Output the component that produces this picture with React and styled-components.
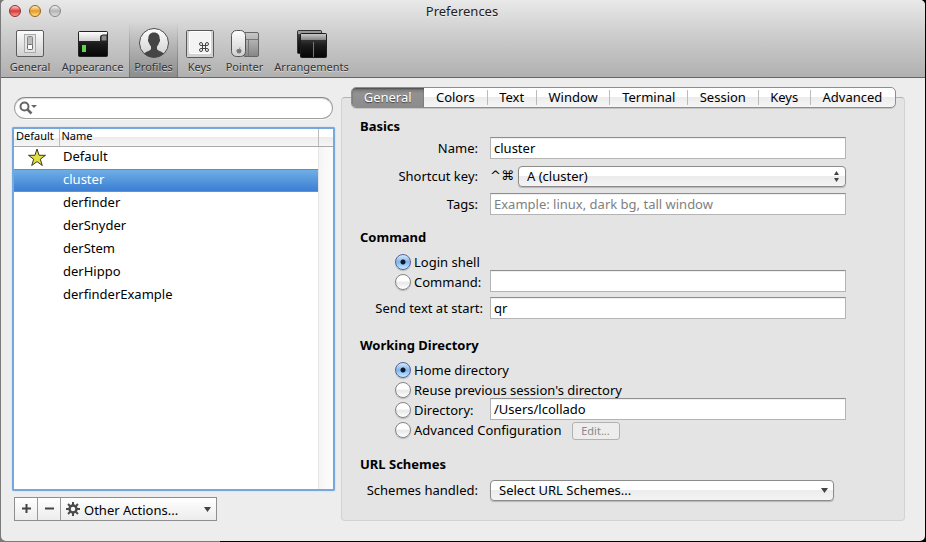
import React, { useState } from "react";
import styled, { createGlobalStyle, css } from "styled-components";

const GlobalStyle = createGlobalStyle`
  * { box-sizing: border-box; }
  body {
    margin: 0;
    background: #000;
    color: #000;
    font: 13px/18px "Lucida Grande", "Noto Sans", "DejaVu Sans", sans-serif;
  }
  button, input, select { font: inherit; color: inherit; margin: 0; }
  button { cursor: default; }
`;

const Desktop = styled.div`
  min-height: 100vh;
  display: flex;
  padding: 0 1px 1px;
  background: linear-gradient(90deg, #7a7a7a 0 220px, #000 220px);
`;

const Window = styled.main`
  flex: 1;
  min-width: 0;
  display: flex;
  flex-direction: column;
  border-radius: 5px;
  background: #ededed;
  overflow: hidden;
`;

const Chrome = styled.header`
  height: 78px;
  border-bottom: 1px solid #666;
  background: linear-gradient(#e9e9e9, #d0d0d0 40%, #b0b0b0);
`;

const TitleBar = styled.div`
  display: grid;
  grid-template-columns: 80px 1fr 82px;
  align-items: center;
  height: 22px;
`;

const Title = styled.h1`
  margin: 0;
  font-size: 13px;
  font-weight: 400;
  text-align: center;
  color: #222;
  text-shadow: 0 1px 0 #fff8;
`;

const Lights = styled.div`
  display: flex;
  gap: 8px;
  padding-left: 8px;
`;

const lightColors = {
  close: ["#ffd0cc", "#d93a3c", "#ff9a94", "#8f2f2f"],
  minimize: ["#fff2c0", "#e79a2a", "#ffe27a", "#966018"],
  zoom: ["#f4f4f4", "#b4b4b4", "#dedede", "#858585"],
};

const Light = styled.button`
  width: 12px;
  height: 12px;
  padding: 0;
  border-radius: 50%;
  border: 1px solid ${(p) => lightColors[p.$kind][3]};
  background: ${({ $kind }) => {
    const [a, b, c] = lightColors[$kind];
    return `linear-gradient(${a}, ${b} 50%, ${c})`;
  }};
`;

const Toolbar = styled.nav`
  display: flex;
  height: 55px;
  padding-left: 3px;
`;

const ToolButton = styled.button`
  display: flex;
  flex-direction: column;
  align-items: center;
  width: ${(p) => p.$width}px;
  padding: 5px 0 0;
  border: 0;
  background: none;
  color: #333;
  font-size: 11px;
  line-height: 14px;
  white-space: nowrap;
  text-shadow: 0 1px 0 #fff8;
  ${(p) =>
    p.$active &&
    css`
      background:
        linear-gradient(#6660, #666a) left / 1px 100% no-repeat,
        linear-gradient(#6660, #666a) right / 1px 100% no-repeat,
        linear-gradient(#0000, #0003);
    `}
`;

const ToolIcon = styled.svg`
  display: block;
  width: 32px;
  height: 33px;
`;

const Content = styled.div`
  flex: 1;
  display: grid;
  grid-template-columns: minmax(0, 323fr) minmax(0, 564fr);
  gap: 6px;
  padding: 9px 20px 20px 11px;
`;

const Sidebar = styled.section`
  display: flex;
  flex-direction: column;
  padding-top: 10px;
`;

const SearchBox = styled.label`
  display: flex;
  align-items: center;
  gap: 2px;
  height: 22px;
  margin: 0 2px;
  padding: 0 10px 0 4px;
  border: 1px solid #a0a0a0;
  border-top-color: #858585;
  border-radius: 11px;
  background: #fff;
  box-shadow: inset 0 1px 1px #0002, 0 1px #fffa;
`;

const SearchInput = styled.input`
  flex: 1;
  min-width: 0;
  padding: 0;
  border: 0;
  outline: 0;
  background: none;
`;

const TableFrame = styled.div`
  flex: 1;
  display: grid;
  margin: 8px 0 6px;
  border: 2px solid #76a7de;
  border-radius: 2px;
  background: #fff;
  box-shadow: 0 0 1px #76a7de;
`;

const ProfileTable = styled.table`
  width: 100%;
  height: 100%;
  table-layout: fixed;
  border-collapse: collapse;
`;

const Head = styled.th`
  width: ${(p) => (p.$width ? `${p.$width}px` : "auto")};
  height: 17px;
  padding: 0 2px 2px;
  border-bottom: 1px solid #aaa;
  border-left: ${(p) => (p.$first ? "0" : "1px solid #bbb")};
  background: linear-gradient(#fff 0 50%, #ececec 50%, #f6f6f6);
  font-size: 11px;
  font-weight: 400;
  line-height: 14px;
  text-align: left;
`;

const Cell = styled.td`
  height: 23px;
  padding: 0 3px 4px 4px;
  line-height: 18px;
  vertical-align: middle;
`;

const StarCell = styled(Cell)`
  padding: 0;
  text-align: center;
  svg { display: block; margin: 0 auto; }
`;

const TrackCell = styled.td`
  padding: 0;
  border-left: 1px solid #e4e4e4;
  background: linear-gradient(90deg, #f4f4f4, #fdfdfd);
`;

const ProfileRow = styled.tr`
  ${(p) =>
    p.$selected &&
    css`
      color: #fff;
      ${Cell} {
        background: linear-gradient(#70afe6, #3b7dd2);
        border-top: 1px solid #4d92d8;
      }
    `}
`;

const ActionBar = styled.div`
  display: flex;
  align-self: flex-start;
  height: 24px;
  margin-left: 2px;
  border: 1px solid #8f8f8f;
  background: linear-gradient(#fff, #ececec);
`;

const ActionButton = styled.button`
  display: grid;
  place-items: center;
  width: 23px;
  padding: 0 0 2px;
  border: 0;
  border-right: 1px solid #999;
  background: none;
`;

const ActionMenu = styled.label`
  display: flex;
  align-items: center;
  gap: 4px;
  width: 155px;
  padding: 0 5px;
`;

const PlainSelect = styled.select`
  appearance: none;
  flex: 1;
  min-width: 0;
  height: 22px;
  padding: 2px 0 0;
  border: 0;
  background: none;
`;

const Pane = styled.section`
  display: flex;
  flex-direction: column;
`;

const Tabs = styled.div`
  z-index: 1;
  display: flex;
  height: 21px;
  margin: 0 9px -11px 10px;
  border: 1px solid #8e8e8e;
  border-radius: 5px;
  background: linear-gradient(#fff 0 45%, #ececec 50%, #f6f6f6);
  box-shadow: 0 1px #0002;
  overflow: hidden;
`;

const Tab = styled.button`
  flex: 1 1 auto;
  display: flex;
  align-items: center;
  justify-content: center;
  padding: 0;
  border: 0;
  background: none;
  white-space: nowrap;
  &::after {
    content: "";
    width: 1px;
    height: 15px;
    background: ${(p) => (p.$active ? "none" : "#bbb")};
  }
  &:last-child::after { background: none; }
  span { flex: 1; padding: 0 8px 2px; }
  ${(p) =>
    p.$active &&
    css`
      color: #fff;
      background: linear-gradient(#777, #929292 30%, #8c8c8c);
      box-shadow: inset 0 1px 2px #0006;
      text-shadow: 0 1px 1px #444;
    `}
`;

const Panel = styled.div`
  flex: 1;
  padding: 19px 58px 18px 18px;
  border: 1px solid #d2d2d2;
  border-top-color: #b4b4b4;
  border-radius: 4px;
  background: #e4e4e4;
`;

const Section = styled.section`
  margin-top: ${(p) => p.$gap || 0}px;
`;

const Heading = styled.h2`
  margin: 0 0 ${(p) => p.$gap}px;
  font-size: 13px;
  line-height: 18px;
  font-weight: 700;
`;

const Row = styled.div`
  display: flex;
  align-items: center;
  height: 22px;
  & + & { margin-top: 6px; }
`;

const RadioRow = styled.div`
  display: flex;
  align-items: flex-end;
  height: 20px;
  padding-left: 35px;
  & + ${Row} { margin-top: 5px; }
`;

const FieldLabel = styled.label`
  flex: 0 0 130px;
  padding-right: ${(p) => (p.$wide ? 7 : 12)}px;
  text-align: right;
  white-space: nowrap;
`;

const RadioLabel = styled.label`
  display: flex;
  align-items: center;
  gap: 3px;
  height: 20px;
  min-width: 95px;
  white-space: nowrap;
`;

const Radio = styled.input`
  appearance: none;
  flex: none;
  width: 16px;
  height: 16px;
  border: 1px solid #858585;
  border-radius: 50%;
  background: linear-gradient(#fff 0 40%, #e8e8e8 55%, #fff);
  box-shadow: 0 1px 1px #0003;
  &:checked {
    border-color: #5a6299;
    background: radial-gradient(circle, #10182c 0 2px, #10182c00 3px),
      linear-gradient(#d6e8fa, #80b4ec 50%, #c4ecff);
  }
`;

const TextInput = styled.input`
  flex: 1;
  min-width: 0;
  height: 22px;
  padding: 1px 3px;
  border: 1px solid #b4b4b4;
  border-top-color: #8e8e8e;
  border-radius: 0;
  outline: 0;
  background: #fff;
  box-shadow: inset 0 1px 1px #0001;
  &::placeholder { color: #808080; opacity: 1; }
`;

const Modifier = styled.span`
  flex: 0 0 28px;
  font-family: "DejaVu Sans", sans-serif;
`;

const PopUp = styled.div`
  flex: 1;
  display: grid;
  align-items: center;
  height: 21px;
  margin-right: ${(p) => p.$inset || 0}px;
  border: 1px solid #8b8b8b;
  border-radius: 4px;
  background: linear-gradient(#fff 0 45%, #ececec 50%, #f4f4f4);
  box-shadow: 0 1px 1px #0003;
  > * { grid-area: 1 / 1; }
  > svg { justify-self: end; margin-right: 5px; pointer-events: none; }
`;

const PopUpSelect = styled.select`
  appearance: none;
  width: 100%;
  height: 19px;
  padding: 0 20px 0 8px;
  border: 0;
  background: none;
`;

const EditButton = styled.button`
  width: 48px;
  height: 18px;
  margin-left: 10px;
  padding: 0;
  border: 1px solid #b2b2b2;
  border-radius: 3px;
  background: #ededed;
  font-size: 11px;
  line-height: 14px;
  color: #8a8a8a;
`;

const Defs = () => (
  <defs>
    <linearGradient id="metal" x2="0" y2="1">
      <stop stopColor="#fdfdfd" />
      <stop offset="1" stopColor="#cfcfcf" />
    </linearGradient>
    <linearGradient id="screen" x2="0" y2="1">
      <stop stopColor="#505050" />
      <stop offset=".5" stopColor="#1b1b1b" />
      <stop offset="1" stopColor="#050505" />
    </linearGradient>
    <linearGradient id="steel" x2="0" y2="1">
      <stop stopColor="#c8c8c8" />
      <stop offset="1" stopColor="#858585" />
    </linearGradient>
  </defs>
);

const icons = {
  General: (
    <>
      <rect x="2.5" y="3.5" width="27" height="26" rx="1.5" fill="url(#metal)" stroke="#5c5c5c" />
      <rect x="10.5" y="7.5" width="11" height="18" fill="#e4e4e4" stroke="#aaa" />
      <rect x="13.5" y="9.5" width="5" height="13" rx="1" fill="#bbb" stroke="#858585" />
      <rect x="13.5" y="17.5" width="5" height="5" rx="1" fill="#fff" stroke="#6a6a6a" />
    </>
  ),
  Appearance: (
    <>
      <rect x="1.5" y="4.5" width="29" height="25" rx="1" fill="url(#screen)" stroke="#222" />
      <path d="M2 5h28v3h-5q-2 0-2 2v4H2z" fill="url(#metal)" />
      <path d="M24 14v-4q0-2 2-2h4v6z" fill="#8b8b8b" stroke="#222" />
      <rect x="5" y="18" width="4" height="7" fill="#5fd34b" />
    </>
  ),
  Profiles: (
    <>
      <circle cx="16" cy="16" r="14.5" fill="url(#metal)" stroke="#4c4c4c" />
      <path
        d="M16 5.5c-4.2 0-6 3-5.6 6.6-.9.2-.4 3 .6 3.6.4 1.8 1.2 2.8 2 3.6v2.7c-1 2-4.5 2.200-7 4.600A14.500 14.500 0 0 0 26 26.600c-2.500-2.400-6-2.600-7-4.600v-2.700c.8-.8 1.600-1.800 2-3.600 1-.6 1.500-3.400.6-3.600.4-3.600-1.400-6.600-5.600-6.600z"
        fill="#454545"
      />
    </>
  ),
  Keys: (
    <>
      <rect x="2.5" y="3.5" width="27" height="27" rx="1" fill="#d2d2d2" stroke="#595959" />
      <rect x="5.5" y="4.5" width="21" height="22" rx="1" fill="#f3f3f3" stroke="#fff" />
      <path
        d="M18.500 18.500v-1.500a1.500 1.500 0 1 0-1.500 1.500h6a1.500 1.500 0 1 0-1.500-1.500v6a1.500 1.500 0 1 0 1.500-1.500h-6a1.500 1.500 0 1 0 1.500 1.500z"
        fill="none"
        stroke="#444"
      />
    </>
  ),
  Pointer: (
    <>
      <rect x="14.5" y="5.5" width="15" height="24" rx="1.5" fill="url(#steel)" stroke="#666" />
      <path d="M17 12.500h12M19.500 13v16" stroke="#777" />
      <rect x="2.5" y="3.5" width="14" height="26" rx="5" fill="url(#metal)" stroke="#555" />
      <path d="M10 22.500c1-1 2.800-.2 2.500 1.500-.3 1.800-1.500 2.800-2.500 2.300-1 .5-2.200-.5-2.500-2.300-.3-1.700 1.500-2.500 2.500-1.500zM10 22q0-1.500 1.500-1.700 0 1.500-1.500 1.700z" fill="#777" />
    </>
  ),
  Arrangements: (
    <>
      <rect x="1.5" y="3.5" width="24" height="23" rx="1" fill="url(#screen)" stroke="#333" />
      <path d="M2 4h23v3H2z" fill="#999" />
      <rect x="4.5" y="6.5" width="26" height="24" rx="1" fill="url(#screen)" stroke="#1c1c1c" />
      <path d="M5 7h25v6H5z" fill="url(#steel)" />
      <path d="M17.500 15v15" stroke="#777" />
    </>
  ),
};

const tools = [
  ["General", 52],
  ["Appearance", 73],
  ["Profiles", 49],
  ["Keys", 43],
  ["Pointer", 47],
  ["Arrangements", 87],
];

const profiles = ["Default", "cluster", "derfinder", "derSnyder", "derStem", "derHippo", "derfinderExample"];
const tabs = ["General", "Colors", "Text", "Window", "Terminal", "Session", "Keys", "Advanced"];

const SearchIcon = () => (
  <svg width="19" height="14" fill="none" stroke="#666" strokeWidth="2">
    <circle cx="5.5" cy="5.5" r="4" />
    <path d="m8.500 8.500 4 4" strokeWidth="2.5" />
    <path d="M12 4h6l-3 3z" fill="#666" stroke="none" />
  </svg>
);

const Star = () => (
  <svg width="20" height="19" viewBox="0 0 20 19">
    <path
      d="m10 1 2.100 6.300h6.400l-5.200 3.900 2 6.300-5.300-3.900-5.300 3.900 2-6.300-5.200-3.900h6.400z"
      fill="#e3df3f"
      stroke="#38382c"
    />
  </svg>
);

const Gear = () => (
  <svg width="14" height="14" viewBox="-7 -7 14 14" fill="none" stroke="#4a4a4a">
    <circle r="3.5" strokeWidth="2.5" />
    {[0, 45, 90, 135].map((a) => (
      <path key={a} d="M0-7v3M0 4v3" strokeWidth="2" transform={`rotate(${a})`} />
    ))}
  </svg>
);

const DownArrow = () => (
  <svg width="7" height="5">
    <path d="M0 0h7l-3.500 5z" fill="#444" />
  </svg>
);

const UpDownArrow = () => (
  <svg width="7" height="11">
    <path d="M1 4h5l-2.500-4zM1 7h5l-2.500 4z" fill="#444" />
  </svg>
);

const RadioOption = ({ name, label, value, onPick }) => (
  <RadioLabel>
    <Radio type="radio" name={name} checked={value === label} onChange={() => onPick(label)} />
    {label}
  </RadioLabel>
);

export default function App() {
  const [selected, setSelected] = useState("cluster");
  const [tab, setTab] = useState("General");
  const [command, setCommand] = useState("Login shell");
  const [directory, setDirectory] = useState("Home directory");

  return (
    <>
      <GlobalStyle />
      <Desktop>
        <Window>
          <Chrome>
            <TitleBar>
              <Lights>
                <Light $kind="close" aria-label="Close" />
                <Light $kind="minimize" aria-label="Minimize" />
                <Light $kind="zoom" aria-label="Zoom" />
              </Lights>
              <Title>Preferences</Title>
            </TitleBar>
            <Toolbar>
              {tools.map(([name, width]) => (
                <ToolButton key={name} $width={width} $active={name === "Profiles"}>
                  <ToolIcon viewBox="0 0 32 33">
                    {name === "General" && <Defs />}
                    {icons[name]}
                  </ToolIcon>
                  {name}
                </ToolButton>
              ))}
            </Toolbar>
          </Chrome>

          <Content>
            <Sidebar>
              <SearchBox>
                <SearchIcon />
                <SearchInput type="text" aria-label="Search profiles" />
              </SearchBox>
              <TableFrame>
                <ProfileTable>
                  <thead>
                    <tr>
                      <Head $first $width={45}>Default</Head>
                      <Head>Name</Head>
                      <Head $width={15} />
                    </tr>
                  </thead>
                  <tbody>
                    {profiles.map((name) => (
                      <ProfileRow key={name} $selected={name === selected} onClick={() => setSelected(name)}>
                        <StarCell>{name === "Default" && <Star />}</StarCell>
                        <Cell>{name}</Cell>
                        <TrackCell />
                      </ProfileRow>
                    ))}
                    <tr>
                      <td />
                      <td />
                      <TrackCell />
                    </tr>
                  </tbody>
                </ProfileTable>
              </TableFrame>
              <ActionBar>
                <ActionButton aria-label="Add profile">
                  <svg width="9" height="9"><path d="M4.500 0v9M0 4.500h9" stroke="#444" strokeWidth="2" /></svg>
                </ActionButton>
                <ActionButton aria-label="Remove profile">
                  <svg width="9" height="9"><path d="M0 4.500h9" stroke="#444" strokeWidth="2" /></svg>
                </ActionButton>
                <ActionMenu>
                  <Gear />
                  <PlainSelect aria-label="Other actions">
                    <option>Other Actions...</option>
                  </PlainSelect>
                  <DownArrow />
                </ActionMenu>
              </ActionBar>
            </Sidebar>

            <Pane>
              <Tabs role="tablist">
                {tabs.map((name) => (
                  <Tab key={name} role="tab" aria-selected={tab === name} $active={tab === name} onClick={() => setTab(name)}>
                    <span>{name}</span>
                  </Tab>
                ))}
              </Tabs>
              <Panel>
                <Section>
                  <Heading $gap={2}>Basics</Heading>
                  <Row>
                    <FieldLabel htmlFor="name">Name:</FieldLabel>
                    <TextInput id="name" defaultValue="cluster" />
                  </Row>
                  <Row>
                    <FieldLabel htmlFor="shortcut">Shortcut key:</FieldLabel>
                    <Modifier>^⌘</Modifier>
                    <PopUp>
                      <PopUpSelect id="shortcut">
                        <option>A (cluster)</option>
                      </PopUpSelect>
                      <UpDownArrow />
                    </PopUp>
                  </Row>
                  <Row>
                    <FieldLabel htmlFor="tags">Tags:</FieldLabel>
                    <TextInput id="tags" placeholder="Example: linux, dark bg, tall window" />
                  </Row>
                </Section>

                <Section $gap={13}>
                  <Heading $gap={6}>Command</Heading>
                  <RadioRow>
                    <RadioOption name="command" label="Login shell" value={command} onPick={setCommand} />
                  </RadioRow>
                  <RadioRow>
                    <RadioOption name="command" label="Command:" value={command} onPick={setCommand} />
                    <TextInput aria-label="Command" />
                  </RadioRow>
                  <Row>
                    <FieldLabel htmlFor="send" $wide>Send text at start:</FieldLabel>
                    <TextInput id="send" defaultValue="qr" />
                  </Row>
                </Section>

                <Section $gap={17}>
                  <Heading $gap={6}>Working Directory</Heading>
                  <RadioRow>
                    <RadioOption name="dir" label="Home directory" value={directory} onPick={setDirectory} />
                  </RadioRow>
                  <RadioRow>
                    <RadioOption name="dir" label="Reuse previous session's directory" value={directory} onPick={setDirectory} />
                  </RadioRow>
                  <RadioRow>
                    <RadioOption name="dir" label="Directory:" value={directory} onPick={setDirectory} />
                    <TextInput aria-label="Directory" defaultValue="/Users/lcollado" />
                  </RadioRow>
                  <RadioRow>
                    <RadioOption name="dir" label="Advanced Configuration" value={directory} onPick={setDirectory} />
                    <EditButton disabled>Edit...</EditButton>
                  </RadioRow>
                </Section>

                <Section $gap={15}>
                  <Heading $gap={6}>URL Schemes</Heading>
                  <Row>
                    <FieldLabel htmlFor="schemes">Schemes handled:</FieldLabel>
                    <PopUp $inset={12}>
                      <PopUpSelect id="schemes">
                        <option>Select URL Schemes...</option>
                      </PopUpSelect>
                      <DownArrow />
                    </PopUp>
                  </Row>
                </Section>
              </Panel>
            </Pane>
          </Content>
        </Window>
      </Desktop>
    </>
  );
}
